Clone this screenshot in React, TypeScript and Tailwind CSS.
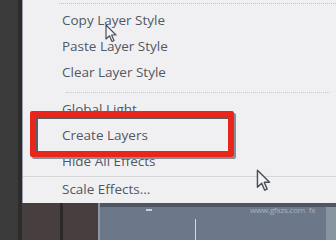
import React from "react";

function Cursor({ className }: { className: string }) {
  return (
    <svg className={className} viewBox="0 0 12 19" width="12" height="19">
      <path
        d="M1 1 L1 15 L4.5 11.8 L7 17.5 L9 16.6 L6.6 11 L11 11 Z"
        fill="#f4f4f6"
        stroke="#4a4f5a"
        strokeWidth="1.2"
        strokeLinejoin="round"
      />
    </svg>
  );
}

function Item({ label }: { label: string }) {
  return (
    <div className="h-[26px] pl-[39px] flex items-center text-[13.5px] text-[#525763] leading-none">
      {label}
    </div>
  );
}

function Sep({ className }: { className: string }) {
  return <div className={className} />;
}

export default function App() {
  return (
    <div
      className="relative w-[336px] h-[240px] overflow-hidden bg-[#3b3b3b] flex"
      style={{ fontFamily: '"Open Sans", "Liberation Sans", sans-serif' }}
    >
      {/* left dark strip */}
      <div className="w-[18px] h-full bg-[#3c3b3b]" />
      <div className="w-[4px] h-full bg-[#2c2c2c]" />

      <div className="flex-1 flex flex-col">
        {/* MENU */}
        <div className="h-[203px] bg-[#f0f0f2] border-l border-[#9aa0ae] shadow-[0_1px_0_#c9c9cc] flex flex-col">
          <div className="h-[3px]" />
          <Sep className="ml-[36px] border-t border-dotted border-[#c4c4c8]" />
          <div className="h-[4px]" />
          <Item label="Copy Layer Style" />
          <Item label="Paste Layer Style" />
          <Item label="Clear Layer Style" />
          <div className="h-[6px]" />
          <Sep className="ml-[43px] mr-[6px] border-t border-dotted border-[#c8c8cc]" />
          <div className="h-[4px]" />
          <Item label="Global Light" />
          <Item label="Create Layers" />
          <Item label="Hide All Effects" />
          <div className="h-[1px]" />
          <Sep className="ml-0 border-t border-[#d6d6d9]" />
          <Item label="Scale Effects..." />
        </div>

        {/* BOTTOM PANELS */}
        <div className="flex-1 flex">
          <div className="w-[38px] bg-[#473f3f]" />
          <div className="w-[3px] bg-[#2b2929]" />
          <div className="w-[35px] bg-[#473f3f]" />
          <div className="w-[2px] bg-[#8d95a2]" />
          <div className="flex-1 bg-[#6c7889] relative">
            <div className="h-[4px] bg-[#4f5562]" />
            <div className="absolute left-[46px] top-[4px] w-[6px] h-[4px] border-b-2 border-[#c9ced6]" />
            <div className="absolute left-[95px] top-[16px] w-px h-[24px] bg-[#d7dbe1]" />
            <div className="absolute left-[150px] top-[3px] text-[8px] text-[#aab1bc] leading-none tracking-tight">
              www.gfxzs.com&nbsp;&nbsp;fx
            </div>
            <div className="absolute right-0 top-[4px] w-[10px] h-full bg-[#8a94a0]" />
          </div>
        </div>
      </div>

      {/* red highlight */}
      <div className="absolute left-[30px] top-[111px] w-[204px] h-[46px] border-[6px] border-[#e8261c] rounded-[2px] shadow-[inset_2px_2px_0_#5a5d66,2px_2px_0_#8a8d96]" />

      <Cursor className="absolute left-[105px] top-[24px]" />
      <Cursor className="absolute left-[256px] top-[169px] w-[15px] h-[23px]" />
    </div>
  );
}
